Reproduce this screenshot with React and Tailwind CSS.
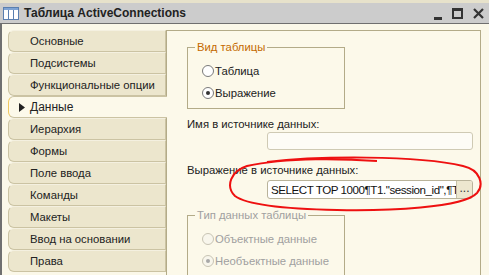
import React from 'react';

const tabs = [
  'Основные',
  'Подсистемы',
  'Функциональные опции',
  'Данные',
  'Иерархия',
  'Формы',
  'Поле ввода',
  'Команды',
  'Макеты',
  'Ввод на основании',
  'Права',
];

function Radio({ checked, disabled, label }) {
  return (
    <div className="flex items-center h-[22px]">
      <span
        className={`w-[12px] h-[12px] rounded-full border flex items-center justify-center ${
          disabled ? 'border-[#c8c4b4] bg-[#f8f6ec]' : 'border-[#7a7a7a] bg-white'
        }`}
      >
        {checked && (
          <span className={`w-[4px] h-[4px] rounded-full ${disabled ? 'bg-[#a8a8a8]' : 'bg-[#333]'}`} />
        )}
      </span>
      <span className={`ml-[1px] ${disabled ? 'text-[#a0a0a0]' : 'text-[#222]'}`}>{label}</span>
    </div>
  );
}

function GroupBox({ title, disabled, children }) {
  return (
    <div className="relative w-[158px] border border-[#b3ab88] pt-[12px] pb-[4px] pl-[14px]">
      <span
        className={`absolute left-[7px] top-[-8px] px-[2px] leading-[14px] bg-[#fcf9ea] ${
          disabled ? 'text-[#a0a0a0]' : 'text-[#c46a00]'
        }`}
      >
        {title}
      </span>
      {children}
    </div>
  );
}

export default function App() {
  return (
    <div
      className="w-[489px] h-[275px] overflow-hidden bg-[#fbf8e9] text-[11.3px] text-[#222] relative"
      style={{ fontFamily: '"Liberation Sans", Arial, sans-serif' }}
    >
      <div className="h-[3px] bg-[#e7e2cb]" />
      {/* title bar */}
      <div className="h-[21px] bg-[#cccccc] flex items-center border-b border-[#6f6f6f]">
        <svg width="16" height="13" viewBox="0 0 16 13" className="ml-[3px]">
          <rect x="0.5" y="0.5" width="15" height="12" fill="#fff" stroke="#5a7fb0" />
          <rect x="1" y="1" width="14" height="2" fill="#7fa4d4" />
          <line x1="5.5" y1="3" x2="5.5" y2="12" stroke="#5a7fb0" />
          <line x1="10.5" y1="3" x2="10.5" y2="12" stroke="#5a7fb0" />
        </svg>
        <span className="ml-[5px] font-bold text-[12px] text-[#222]">Таблица ActiveConnections</span>
        <div className="ml-auto flex items-center mr-[5px]">
          <span className="w-[8px] h-[3px] bg-[#333] mt-[10px]" />
          <span className="ml-[10px] w-[11px] h-[11px] border-2 border-[#333] border-t-[3px]" />
          <svg width="11" height="11" viewBox="0 0 11 11" className="ml-[10px]">
            <path d="M1 1L10 10M10 1L1 10" stroke="#333" strokeWidth="2.2" />
          </svg>
        </div>
      </div>

      <div className="flex border-l-2 border-[#707070] h-[251px] pl-[6px] pt-[6px]">
        {/* tabs */}
        <div className="w-[158px] flex flex-col">
          {tabs.map((t, i) => {
            const active = t === 'Данные';
            return (
              <div
                key={t}
                className={`h-[22px] flex items-center rounded-l-[6px] border border-[#cbc3a3] ${
                  active
                    ? 'bg-[#fcf9ea] border-r-0 border-l-[#f0c860] relative z-10 w-[159px]'
                    : 'bg-[#ece6cd] border-t-[#f4f0e0]'
                } ${i === 0 ? 'border-t-[#cbc3a3]' : ''}`}
              >
                {active ? (
                  <>
                    <svg width="6" height="9" viewBox="0 0 6 9" className="ml-[10px] mr-[5px]">
                      <path d="M0 0L6 4.5L0 9Z" fill="#222" />
                    </svg>
                    <span className="text-[12px]">{t}</span>
                  </>
                ) : (
                  <span className="ml-[21px]">{t}</span>
                )}
              </div>
            );
          })}
        </div>

        {/* content panel */}
        <div className="relative w-[315px] h-[260px] border border-[#b3ab88] bg-[#fcf9ea] pl-[20px] pt-[16px]">
          <GroupBox title="Вид таблицы">
            <Radio label="Таблица" />
            <Radio label="Выражение" checked />
          </GroupBox>

          <div className="mt-[8px] leading-[14px]">Имя в источнике данных:</div>
          <div className="ml-[80px] mt-[1px] w-[206px] h-[18px] border border-[#cfcab4] rounded-[3px] bg-[#fdfcf6]" />

          <div className="mt-[13px] leading-[14px]">Выражение в источнике данных:</div>
          <div className="ml-[80px] mt-[3px] w-[206px] h-[19px] flex border border-[#b9b39a] rounded-[3px] bg-white overflow-hidden">
            <div className="flex-1 pl-[3px] text-[11.6px] tracking-[-0.45px] leading-[17px] whitespace-nowrap overflow-hidden text-[#111]">
              SELECT TOP 1000¶T1."session_id",¶T
            </div>
            <div className="w-[16px] shrink-0 border-l border-[#c7c1a6] bg-[#ede7cf] text-[12px] leading-[15px] text-center text-[#333]">
              ...
            </div>
          </div>

          <div className="mt-[16px]">
            <GroupBox title="Тип данных таблицы" disabled>
              <Radio label="Объектные данные" disabled />
              <Radio label="Необъектные данные" checked disabled />
            </GroupBox>
          </div>

          {/* red marker loop */}
          <svg
            className="absolute left-[60px] top-[124px] pointer-events-none"
            width="258"
            height="60"
            viewBox="0 0 258 60"
          >
            <path
              d="M40 7 C90 1 190 0 236 11 C254 15 257 30 250 38 C236 53 160 56 110 55 C60 54 20 50 8 41 C-2 31 4 16 20 11 C60 2 120 4 150 6"
              fill="none"
              stroke="#ee1010"
              strokeWidth="2"
            />
          </svg>
        </div>
      </div>
    </div>
  );
}
